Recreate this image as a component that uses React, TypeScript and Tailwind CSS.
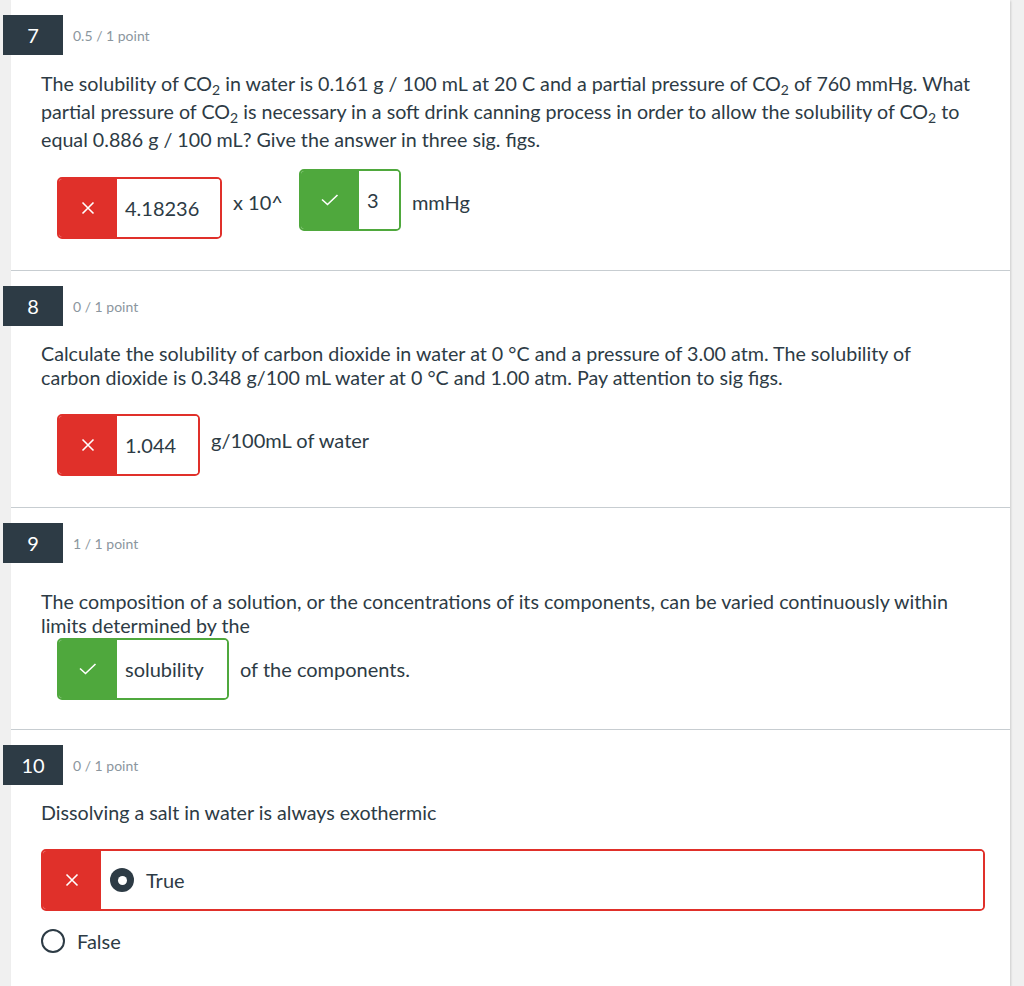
import React from "react";

function XIcon() {
  return (
    <svg width="14" height="14" viewBox="0 0 14 14">
      <path d="M1.5 1.5L12.5 12.5M12.5 1.5L1.5 12.5" stroke="white" strokeWidth="1.6" fill="none" />
    </svg>
  );
}

function CheckIcon() {
  return (
    <svg width="18" height="12" viewBox="0 0 18 12">
      <path d="M1 5.5L6.5 10.5L16.5 1" stroke="white" strokeWidth="1.6" fill="none" />
    </svg>
  );
}

function AnswerBox({ ok, value, width }: { ok: boolean; value: string; width: string }) {
  return (
    <div
      className={`flex h-[62px] shrink-0 overflow-hidden rounded-[5px] border-2 ${
        ok ? "border-[#4fa83d]" : "border-[#e0302a]"
      } ${width}`}
    >
      <div className={`flex w-[58px] shrink-0 items-center justify-center ${ok ? "bg-[#4fa83d]" : "bg-[#e0302a]"}`}>
        {ok ? <CheckIcon /> : <XIcon />}
      </div>
      <div className="flex flex-1 items-center bg-white pl-2 text-[20px] text-[#2d3b45]">{value}</div>
    </div>
  );
}

function Header({ n, pts }: { n: string; pts: string }) {
  return (
    <div className="flex h-10 items-center">
      <div className="ml-[-8px] flex h-10 w-[60px] items-center justify-center bg-[#2d3b45] text-[20px] text-white">
        {n}
      </div>
      <div className="ml-[10px] text-[14px] text-[#8b969e]">{pts}</div>
    </div>
  );
}

function Sub() {
  return <sub className="text-[14px]">2</sub>;
}

export default function App() {
  return (
    <div className="min-h-[986px] bg-[#f0f0f0] font-['Lato','Liberation_Sans',sans-serif] text-[#2d3b45]">
      <div className="ml-[11px] w-[999px] bg-white shadow-[1px_1px_2px_rgba(0,0,0,0.15)]">
        {/* Q7 */}
        <section className="border-b border-[#c7cdd1] pt-[15px] pb-[31px]">
          <Header n="7" pts="0.5 / 1 point" />
          <div className="pl-[30px] pr-[25px]">
            <p className="mt-[15px] pr-[12px] text-[19.68px] leading-[28px]">
              The solubility of CO<Sub /> in water is 0.161 g / 100 mL at 20 C and a partial pressure of CO<Sub /> of
              760 mmHg. What partial pressure of CO<Sub /> is necessary in a soft drink canning process in order to
              allow the solubility of CO<Sub /> to equal 0.886 g / 100 mL? Give the answer in three sig. figs.
            </p>
            <div className="ml-4 mt-[15px] flex items-start">
              <div className="mt-2">
                <AnswerBox ok={false} value="4.18236" width="w-[165px]" />
              </div>
              <div className="ml-[11px] mt-[21px] text-[20px] leading-[24px]">x 10^</div>
              <div className="ml-[16px]">
                <AnswerBox ok={true} value="3" width="w-[102px]" />
              </div>
              <div className="ml-[11px] mt-[21px] text-[20px] leading-[24px]">mmHg</div>
            </div>
          </div>
        </section>

        {/* Q8 */}
        <section className="border-b border-[#c7cdd1] pt-[15px] pb-[31px]">
          <Header n="8" pts="0 / 1 point" />
          <div className="pl-[30px] pr-[25px]">
            <p className="mt-[16px] pr-[12px] text-[19.68px] leading-[24px]">
              Calculate the solubility of carbon dioxide in water at 0 °C and a pressure of 3.00 atm. The solubility of
              carbon dioxide is 0.348 g/100 mL water at 0 °C and 1.00 atm. Pay attention to sig figs.
            </p>
            <div className="ml-4 mt-[24px] flex items-start">
              <AnswerBox ok={false} value="1.044" width="w-[143px]" />
              <div className="ml-[11px] mt-[14px] text-[20px] leading-[24px]">g/100mL of water</div>
            </div>
          </div>
        </section>

        {/* Q9 */}
        <section className="border-b border-[#c7cdd1] pt-[15px] pb-[29px]">
          <Header n="9" pts="1 / 1 point" />
          <div className="pl-[30px] pr-[25px]">
            <p className="mt-[27px] pr-[12px] text-[19.68px] leading-[24px]">
              The composition of a solution, or the concentrations of its components, can be varied continuously within
              limits determined by the
            </p>
            <div className="ml-4 flex items-start">
              <AnswerBox ok={true} value="solubility" width="w-[172px]" />
              <div className="ml-[11px] mt-[19px] text-[20px] leading-[24px]">of the components.</div>
            </div>
          </div>
        </section>

        {/* Q10 */}
        <section className="pt-[15px] pb-[30px]">
          <Header n="10" pts="0 / 1 point" />
          <div className="pl-[30px] pr-[25px]">
            <p className="mt-[16px] text-[19.68px] leading-[24px]">Dissolving a salt in water is always exothermic</p>
            <div className="mt-[24px] flex h-[62px] overflow-hidden rounded-[5px] border-2 border-[#e0302a]">
              <div className="flex w-[58px] shrink-0 items-center justify-center bg-[#e0302a]">
                <XIcon />
              </div>
              <div className="flex flex-1 items-center bg-white pl-[9px]">
                <div className="flex h-6 w-6 items-center justify-center rounded-full bg-[#2d3b45]">
                  <div className="h-[9px] w-[9px] rounded-full bg-white" />
                </div>
                <span className="ml-[12px] text-[20px]">True</span>
              </div>
            </div>
            <div className="mt-[15px] flex items-center">
              <div className="h-6 w-6 rounded-full border-2 border-[#2d3b45]" />
              <span className="ml-[12px] text-[20px]">False</span>
            </div>
          </div>
        </section>
      </div>
    </div>
  );
}
